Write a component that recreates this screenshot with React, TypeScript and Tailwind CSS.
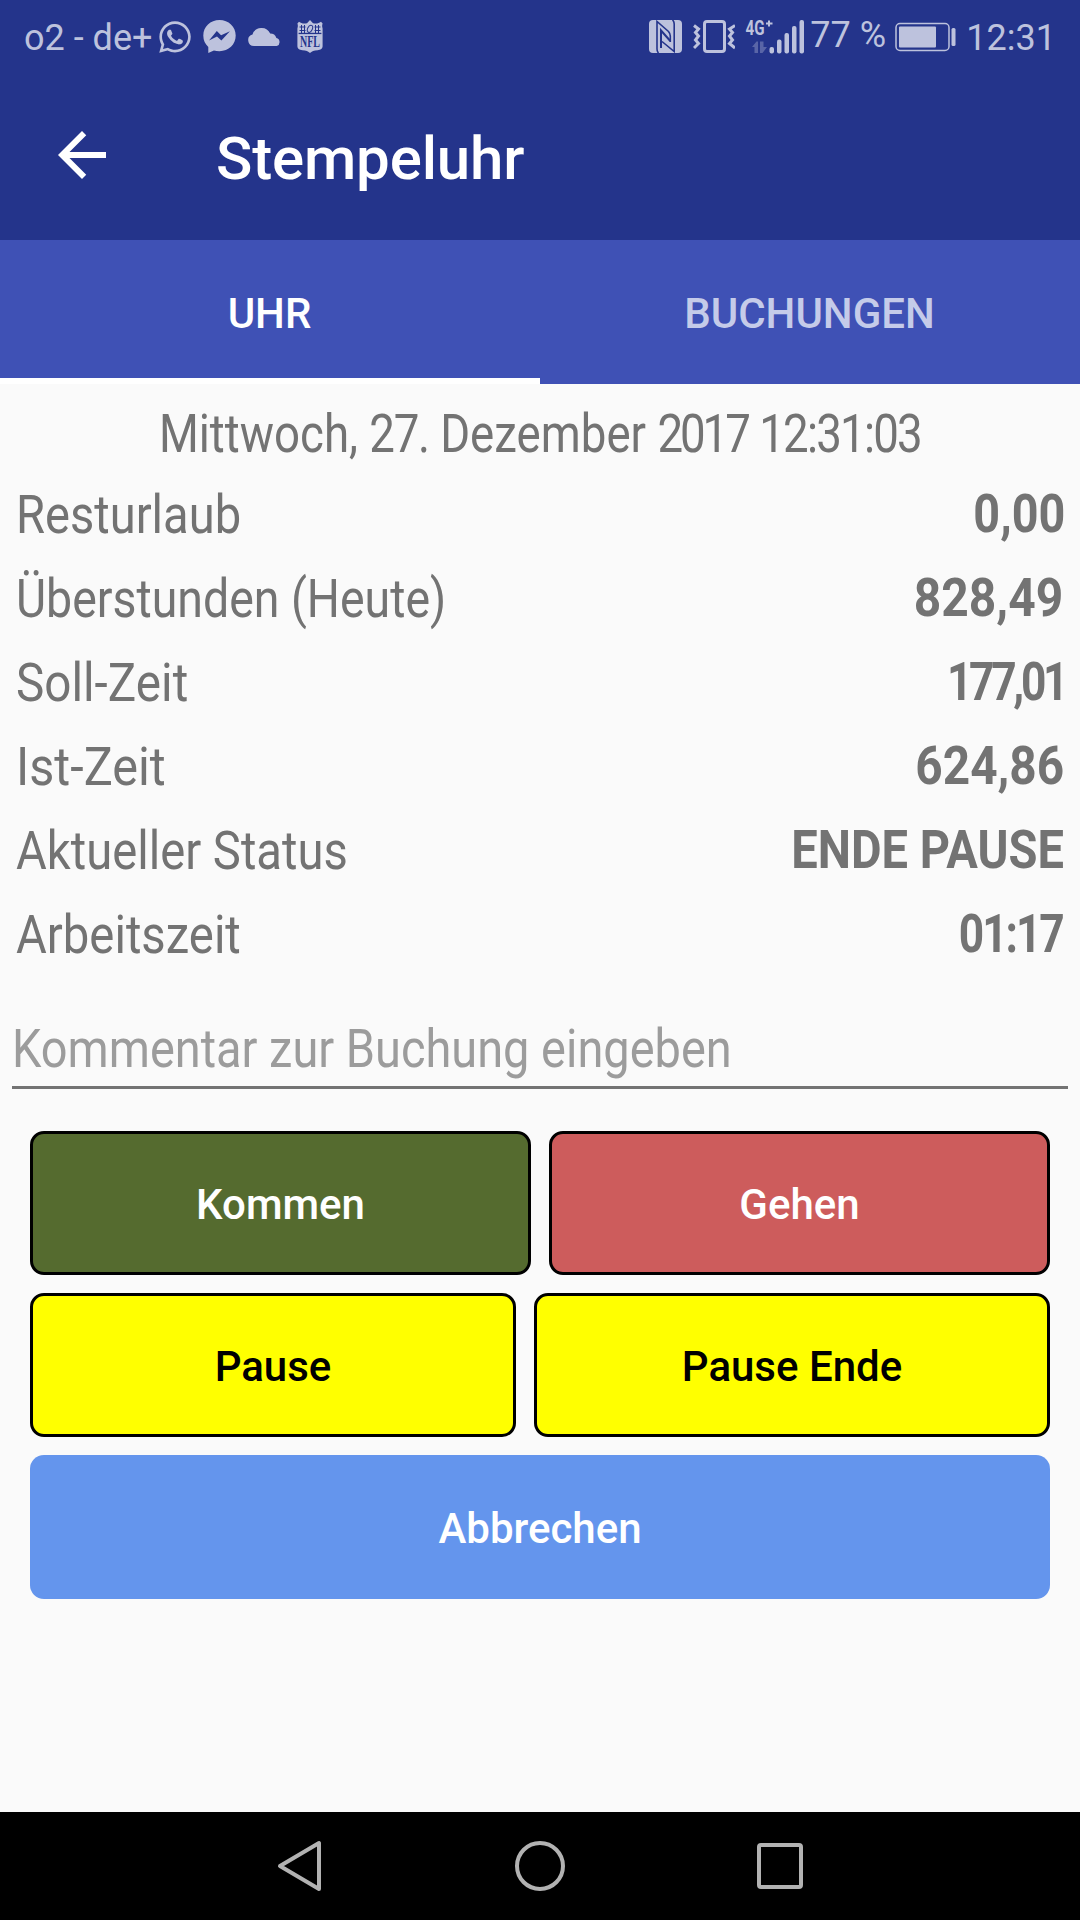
import React from 'react';
import { FaWhatsapp } from 'react-icons/fa';
import { clsx } from 'clsx';

const stats = [
  { label: 'Resturlaub', value: '0,00', labelFit: 'scale-x-[0.872]', valueFit: 'scale-x-[0.865]' },
  { label: 'Überstunden (Heute)', value: '828,49', labelFit: 'scale-x-[0.86]', valueFit: 'scale-x-[0.888] mr-0.5' },
  { label: 'Soll-Zeit', value: '177,01', labelFit: 'scale-x-[0.882]', valueFit: 'scale-x-[0.82] tracking-[-4px]' },
  { label: 'Ist-Zeit', value: '624,86', labelFit: 'scale-x-[0.9]', valueFit: 'scale-x-[0.885] mr-px' },
  { label: 'Aktueller Status', value: 'ENDE PAUSE', labelFit: 'scale-x-[0.874]', valueFit: 'scale-x-[0.871] mr-px' },
  { label: 'Arbeitszeit', value: '01:17', labelFit: 'scale-x-[0.875]', valueFit: 'scale-x-[0.82] tracking-[-2.5px] mr-0.5' },
];

const MessengerIcon = () => (
  <svg className="ml-[11px] h-[33px] w-[33px]" viewBox="0 0 33 33">
    <path fill="currentColor" d="M16.500 0C7.400 0 .3 6.600.3 15.600c0 4.800 1.800 8.600 5 11.400V33l5.600-2.600c1.800.5 3.600.8 5.600.8 9.100 0 16.200-6.600 16.200-15.600S25.600 0 16.500 0z" />
    <path fill="#24348b" d="M6 20.500 13.800 11l4.300 4.200 8.800-4-8.500 9.300-4.400-4z" />
  </svg>
);

const CloudIcon = () => (
  <svg className="ml-3 h-[18px] w-[33px]" viewBox="0 0 33 18">
    <path fill="currentColor" d="M6 18a5.800 5.800 0 0 1-1.500-11.400A9.500 9.500 0 0 1 22.200 5.600 6.500 6.500 0 0 1 28.400 10 4.200 4.200 0 0 1 28.800 18z" />
  </svg>
);

const ShieldIcon = () => (
  <svg className="ml-4 h-[33px] w-[26px] overflow-visible" viewBox="0 0 26 33">
    <path fill="currentColor" d="M13 0l3 3.200c3 .8 5.600.4 8-1.400l1.600 1.700c-.8 2-.4 3.500 0 5V26c0 3-2 3.800-5 4.200-3.500.4-6 1-7.600 2.800-1.600-1.800-4.100-2.400-7.600-2.800-3-.4-5-1.200-5-4.200V8.500c.4-1.500.8-3 0-5L2 1.800c2.400 1.800 5 2.200 8 1.400z" />
    <path stroke="#24348b" strokeWidth="1" d="M2.500 7h6M2.500 10.500h6M4.500 5v8M7.500 5v8M17.500 7h6M17.500 10.500h6M18.500 5v8M21.500 5v8" />
    <path fill="#24348b" d="M1.600 12.800h22.800v1.300H1.600z" />
    <ellipse cx="13" cy="8.800" rx="2.300" ry="3.800" fill="none" stroke="#24348b" strokeWidth="1" transform="rotate(25 13 8.800)" />
    <text x="13" y="26.800" textAnchor="middle" fontSize="16" fontWeight="700" textLength="20" lengthAdjust="spacingAndGlyphs" fill="#24348b" fontFamily="Liberation Serif, serif">NFL</text>
  </svg>
);

const NfcIcon = () => (
  <svg className="-mr-px ml-px h-[33px] w-[33px]" viewBox="0 0 33 33">
    <rect width="33" height="33" rx="4" fill="currentColor" />
    <g fill="none" stroke="#24348b">
      <path strokeWidth="1.600" d="M9.500 33Q8 31.500 8 29V1.500L19.500 11.500Q21.300 13.500 21.300 16v6" />
      <path strokeWidth="1.600" d="M23.500 0Q25.200 1.500 25.200 4v27.500L13 21.500" />
      <path strokeWidth="2" d="M12 28V10.500l9.300 10.500" />
    </g>
  </svg>
);

const VibrateIcon = () => (
  <svg className="ml-3 h-[33px] w-[42px]" viewBox="0 0 42 33" fill="none" stroke="currentColor">
    <rect x="11.500" y="1.500" width="20" height="30" rx="2.500" strokeWidth="3" />
    <path strokeWidth="3" d="M1 5.500l4.500 3.500-3 3.500 3 3.500-3 4 3 3.500L1 28M42 5.500L36.500 9l3 3.500-3 3.500 3 4-3 3.500L42 28" />
  </svg>
);

const SignalIcon = () => (
  <svg className="ml-[10px] h-[46px] w-[60px] overflow-visible" viewBox="0 -6 60 46" fill="currentColor">
    <text x="0.500" y="15" fontSize="20" fontWeight="700" textLength="19" lengthAdjust="spacingAndGlyphs" fontFamily="Roboto, sans-serif">4G</text>
    <path d="M24 .5v6M21 3.500h6.500" stroke="currentColor" strokeWidth="2" />
    <path opacity=".35" d="M7 27l4.500-5.500h1.500V33h-3.500v-6zM15 21.500h3.500V27H22l-4.500 6H15z" />
    <rect x="24.500" y="27" width="4.500" height="6.500" rx="2" />
    <rect x="32" y="19.500" width="4.500" height="14" rx="2" />
    <rect x="39.500" y="13" width="4.500" height="20.500" rx="2" />
    <rect x="47" y="6" width="4.500" height="27.500" rx="2" />
    <rect x="54.500" y="0" width="4.500" height="33.500" rx="2" />
  </svg>
);

const BatteryIcon = () => (
  <svg className="ml-[9px] h-[30px] w-[62px]" viewBox="0 0 62 30">
    <rect x="1" y="1.500" width="53" height="27" rx="4" fill="none" stroke="currentColor" strokeWidth="1.500" />
    <rect x="4" y="4.500" width="37" height="21" rx="1" fill="currentColor" />
    <rect x="56.500" y="6" width="4" height="18" rx="1.500" fill="currentColor" />
  </svg>
);

const StatusBar = () => (
  <div className="flex h-[72px] items-center bg-[#24348b] pt-px text-4xl text-[#bdc2dd]">
    <span className="ml-6 w-[134px] whitespace-nowrap pt-[3px]">o2 - de+</span>
    <FaWhatsapp size={36} className="-mx-px" />
    <MessengerIcon />
    <CloudIcon />
    <ShieldIcon />
    <div className="ml-auto flex items-center pr-6">
      <NfcIcon />
      <VibrateIcon />
      <SignalIcon />
      <span className="ml-[5px] w-[76px] whitespace-nowrap pb-[3px]">77 %</span>
      <BatteryIcon />
      <span className="ml-[9px] pt-[3px]">12:31</span>
    </div>
  </div>
);

const ActionButton = ({ className, children }: { className: string; children: React.ReactNode }) => (
  <button className={clsx('h-36 rounded-[14px] pt-1 text-[42px] font-medium', className)}>{children}</button>
);

const App = () => {
  return (
    <div className="flex h-[1920px] w-[1080px] flex-col overflow-hidden bg-[#fafafa] font-[Roboto,sans-serif]">
      <StatusBar />

      <header className="flex h-[168px] items-center bg-[#24348b] text-white">
        <svg className="mb-0.5 ml-[46px] size-[72px]" viewBox="0 0 24 24" fill="currentColor">
          <path d="M20 11H7.830l5.590-5.590L12 4l-8 8 8 8 1.410-1.410L7.830 13H20v-2z" />
        </svg>
        <h1 className="ml-[98px] pt-1.5 text-6xl font-medium tracking-[-0.15px]">Stempeluhr</h1>
      </header>

      <nav className="grid h-36 grid-cols-2 bg-[#3f51b5] text-[42px] font-medium">
        <button className="border-b-[6px] border-white pr-px pt-2 text-white">UHR</button>
        <button className="pr-px pt-0.5 text-[#c5cbe9]">BUCHUNGEN</button>
      </nav>

      <main className="flex-1 text-[54px] leading-[84px] text-[#737373]">
        <p className="mt-2 flex h-[81px] justify-center whitespace-nowrap">
          <span className="scale-x-[0.845]">
            Mittwoch, <span className="tracking-[-1.5px]">27.</span> Dezember{' '}
            <span className="tracking-[-3.6px]">2017</span> <span className="tracking-[-2.1px]">12:31:03</span>
          </span>
        </p>

        <dl className="px-[15px]">
          {stats.map((row) => (
            <div key={row.label} className="flex h-[84px] justify-between whitespace-nowrap">
              <dt className={clsx('ml-px origin-left', row.labelFit)}>{row.label}</dt>
              <dd className={clsx('-mt-px origin-right font-bold', row.valueFit)}>{row.value}</dd>
            </div>
          ))}
        </dl>

        <div className="mx-3 mt-[30px] h-[82px] border-b-[3px] border-[#737373] text-[#9c9c9c]">
          <span className="inline-block origin-left scale-x-[0.869] whitespace-nowrap">Kommentar zur Buchung eingeben</span>
        </div>

        <div className="mx-[30px] mt-[42px] flex flex-col gap-[18px] leading-none">
          <div className="flex gap-[18px]">
            <ActionButton className="flex-1 border-[3px] border-black bg-[#556b2f] text-white">Kommen</ActionButton>
            <ActionButton className="flex-1 border-[3px] border-black bg-[#cd5c5c] text-white">Gehen</ActionButton>
          </div>
          <div className="flex gap-[18px]">
            <ActionButton className="w-[486px] border-[3px] border-black bg-[#ffff00] text-black">Pause</ActionButton>
            <ActionButton className="flex-1 border-[3px] border-black bg-[#ffff00] text-black">Pause Ende</ActionButton>
          </div>
          <ActionButton className="bg-[#6495ed] text-white">Abbrechen</ActionButton>
        </div>
      </main>

      <footer className="flex h-[108px] items-center justify-center gap-[188px] bg-black text-[#b2b2b2]">
        <svg className="size-[52px]" viewBox="0 0 52 52" fill="none" stroke="currentColor" strokeWidth="4" strokeLinejoin="round">
          <path d="M45 3v46L6 26z" />
        </svg>
        <svg className="size-[52px]" viewBox="0 0 52 52" fill="none" stroke="currentColor" strokeWidth="4">
          <circle cx="26" cy="26" r="23" />
        </svg>
        <svg className="size-[52px]" viewBox="0 0 52 52" fill="none" stroke="currentColor" strokeWidth="4">
          <rect x="5" y="5" width="42" height="42" rx="2" />
        </svg>
      </footer>
    </div>
  );
};

export default App;
